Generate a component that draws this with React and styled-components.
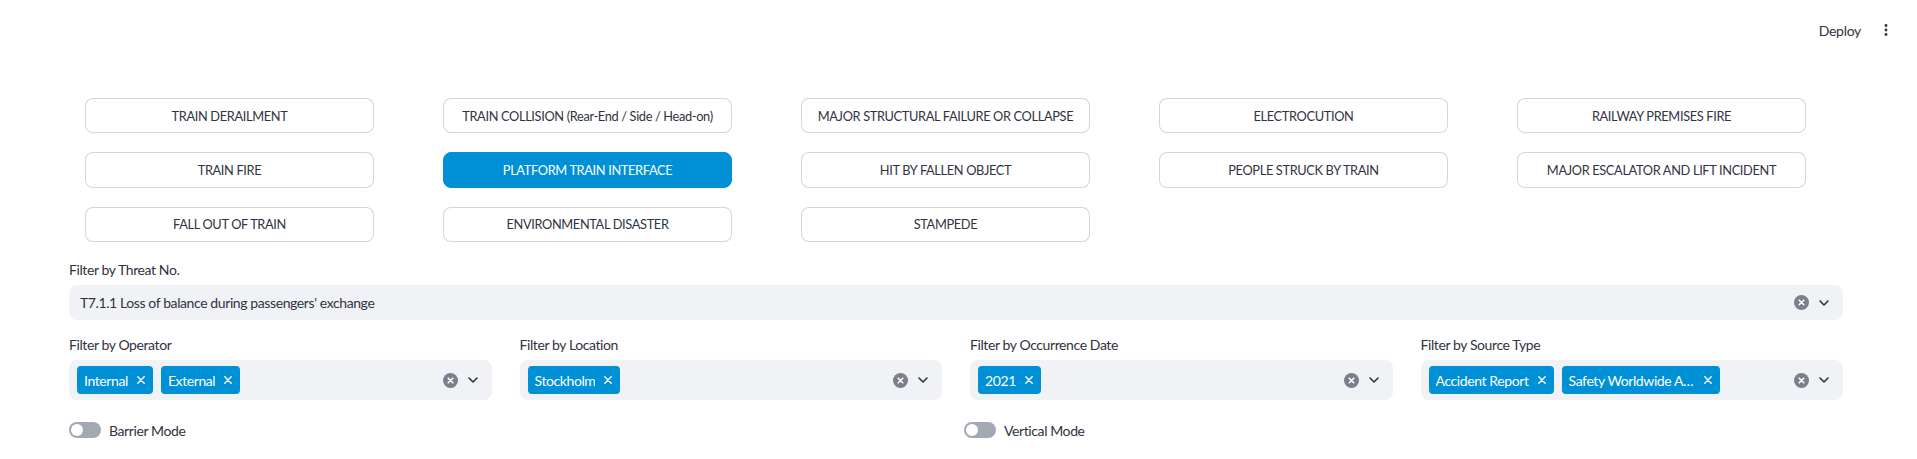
import React from "react";
import styled, { createGlobalStyle } from "styled-components";

const Global = createGlobalStyle`
  html, body { margin: 0; padding: 0; background: #ffffff; }
  body {
    font-family: Lato, "Noto Sans", sans-serif;
    color: #31333f;
    letter-spacing: -0.4px;
    -webkit-font-smoothing: antialiased;
  }
  * { box-sizing: border-box; }
`;

const Page = styled.div`
  width: 1917px;
  min-height: 459px;
  background: #fff;
`;

const Header = styled.header`
  height: 60px;
  display: flex;
  align-items: center;
  justify-content: flex-end;
  padding-right: 21px;
`;

const DeployButton = styled.button`
  border: none;
  background: transparent;
  font-family: inherit;
  letter-spacing: -0.3px;
  font-size: 14px;
  color: #31333f;
  padding: 0 15px;
  height: 32px;
  cursor: pointer;
`;

const IconButton = styled.button`
  border: none;
  background: transparent;
  width: 20px;
  height: 32px;
  display: flex;
  align-items: center;
  justify-content: center;
  padding: 0;
`;

const Main = styled.main`
  width: 1774px;
  margin-left: 69px;
  padding-top: 38px;
  display: flex;
  flex-direction: column;
`;

const ButtonGrid = styled.div`
  display: grid;
  grid-template-columns: repeat(5, 289px);
  column-gap: 69px;
  row-gap: 18.9px;
  padding-left: 16px;
`;

const ThreatButton = styled.button`
  height: 35.4px;
  width: 289px;
  border-radius: 8px;
  border: 1px solid ${(p) => (p.$active ? "#0090d5" : "rgba(49, 51, 63, 0.2)")};
  background: ${(p) => (p.$active ? "#0090d5" : "#ffffff")};
  color: ${(p) => (p.$active ? "#ffffff" : "#31333f")};
  font-family: inherit;
  font-size: 12.8px;
  letter-spacing: -0.35px;
  display: flex;
  align-items: center;
  justify-content: center;
  white-space: nowrap;
  padding: 0 12px;
`;

const Field = styled.div`
  display: flex;
  flex-direction: column;
  margin-top: ${(p) => p.$top || 0}px;
`;

const Label = styled.label`
  font-size: 14px;
  line-height: 20px;
  height: 20px;
  margin-bottom: 5px;
  color: #31333f;
`;

const SelectBox = styled.div`
  height: ${(p) => p.$h}px;
  background: #f0f2f6;
  border-radius: 8px;
  display: flex;
  align-items: center;
  padding-left: ${(p) => p.$pl}px;
  padding-right: 14px;
`;

const SelectValue = styled.div`
  flex: 1;
  font-size: 14px;
  color: #31333f;
  white-space: nowrap;
`;

const Chips = styled.div`
  flex: 1;
  display: flex;
  gap: 8px;
  align-items: center;
`;

const Chip = styled.span`
  height: 28px;
  background: #0090d5;
  border-radius: 4px;
  color: #fff;
  font-size: 14px;
  display: inline-flex;
  align-items: center;
  padding: 0 8px 0 7px;
  gap: 9px;
`;

const ChipText = styled.span`
  white-space: nowrap;
  overflow: hidden;
  text-overflow: ellipsis;
  max-width: ${(p) => (p.$max ? `${p.$max}px` : "none")};
`;

const Indicators = styled.div`
  display: flex;
  align-items: center;
  gap: 10px;
`;

const FilterGrid = styled.div`
  display: grid;
  grid-template-columns: repeat(4, 1fr);
  column-gap: 28px;
  margin-top: 15px;
`;

const ToggleGrid = styled.div`
  display: grid;
  grid-template-columns: 1fr 1fr;
  column-gap: 16px;
  margin-top: 20px;
`;

const ToggleRow = styled.div`
  display: flex;
  align-items: center;
  gap: 8px;
  height: 20px;
  font-size: 14px;
`;

const Track = styled.span`
  width: 32px;
  height: 16px;
  border-radius: 8px;
  background: #a3a8b4;
  position: relative;
  display: inline-block;
  flex: none;
`;

const Knob = styled.span`
  position: absolute;
  left: 2px;
  top: 2px;
  width: 12px;
  height: 12px;
  border-radius: 50%;
  background: #fff;
`;

const Kebab = () => (
  <svg width="4" height="14" viewBox="0 0 4 14">
    <circle cx="2" cy="2.5" r="1.4" fill="#31333f" />
    <circle cx="2" cy="7" r="1.4" fill="#31333f" />
    <circle cx="2" cy="11.5" r="1.4" fill="#31333f" />
  </svg>
);

const ClearIcon = () => (
  <svg width="15" height="15" viewBox="0 0 15 15">
    <circle cx="7.5" cy="7.5" r="7.5" fill="#7b7e8b" />
    <path d="M5.2 5.2 L9.8 9.8 M9.8 5.2 L5.2 9.8" stroke="#fff" strokeWidth="1.6" strokeLinecap="round" />
  </svg>
);

const Chevron = () => (
  <svg width="10" height="6" viewBox="0 0 10 6">
    <path d="M1 1 L5 5 L9 1" stroke="#31333f" strokeWidth="1.6" fill="none" strokeLinecap="round" strokeLinejoin="round" />
  </svg>
);

const CloseX = () => (
  <svg width="8" height="8" viewBox="0 0 8 8">
    <path d="M0.8 0.8 L7.2 7.2 M7.2 0.8 L0.8 7.2" stroke="#fff" strokeWidth="1.4" strokeLinecap="round" />
  </svg>
);

const threats = [
  "TRAIN DERAILMENT",
  "TRAIN COLLISION (Rear-End / Side / Head-on)",
  "MAJOR STRUCTURAL FAILURE OR COLLAPSE",
  "ELECTROCUTION",
  "RAILWAY PREMISES FIRE",
  "TRAIN FIRE",
  "PLATFORM TRAIN INTERFACE",
  "HIT BY FALLEN OBJECT",
  "PEOPLE STRUCK BY TRAIN",
  "MAJOR ESCALATOR AND LIFT INCIDENT",
  "FALL OUT OF TRAIN",
  "ENVIRONMENTAL DISASTER",
  "STAMPEDE",
];

const filters = [
  { label: "Filter by Operator", chips: [{ t: "Internal" }, { t: "External" }] },
  { label: "Filter by Location", chips: [{ t: "Stockholm" }] },
  { label: "Filter by Occurrence Date", chips: [{ t: "2021" }] },
  {
    label: "Filter by Source Type",
    chips: [{ t: "Accident Report" }, { t: "Safety Worldwide Accidents", max: 126 }],
  },
];

export default function App() {
  return (
    <Page>
      <Global />
      <Header>
        <DeployButton>Deploy</DeployButton>
        <IconButton aria-label="menu">
          <Kebab />
        </IconButton>
      </Header>
      <Main>
        <ButtonGrid>
          {threats.map((t) => (
            <ThreatButton key={t} $active={t === "PLATFORM TRAIN INTERFACE"}>
              {t}
            </ThreatButton>
          ))}
        </ButtonGrid>

        <Field $top={18.3}>
          <Label>Filter by Threat No.</Label>
          <SelectBox $h={35} $pl={11}>
            <SelectValue>T7.1.1 Loss of balance during passengers' exchange</SelectValue>
            <Indicators>
              <ClearIcon />
              <Chevron />
            </Indicators>
          </SelectBox>
        </Field>

        <FilterGrid>
          {filters.map((f) => (
            <Field key={f.label}>
              <Label>{f.label}</Label>
              <SelectBox $h={40} $pl={8}>
                <Chips>
                  {f.chips.map((c) => (
                    <Chip key={c.t}>
                      <ChipText $max={c.max}>{c.t}</ChipText>
                      <CloseX />
                    </Chip>
                  ))}
                </Chips>
                <Indicators>
                  <ClearIcon />
                  <Chevron />
                </Indicators>
              </SelectBox>
            </Field>
          ))}
        </FilterGrid>

        <ToggleGrid>
          <ToggleRow>
            <Track>
              <Knob />
            </Track>
            Barrier Mode
          </ToggleRow>
          <ToggleRow>
            <Track>
              <Knob />
            </Track>
            Vertical Mode
          </ToggleRow>
        </ToggleGrid>
      </Main>
    </Page>
  );
}
